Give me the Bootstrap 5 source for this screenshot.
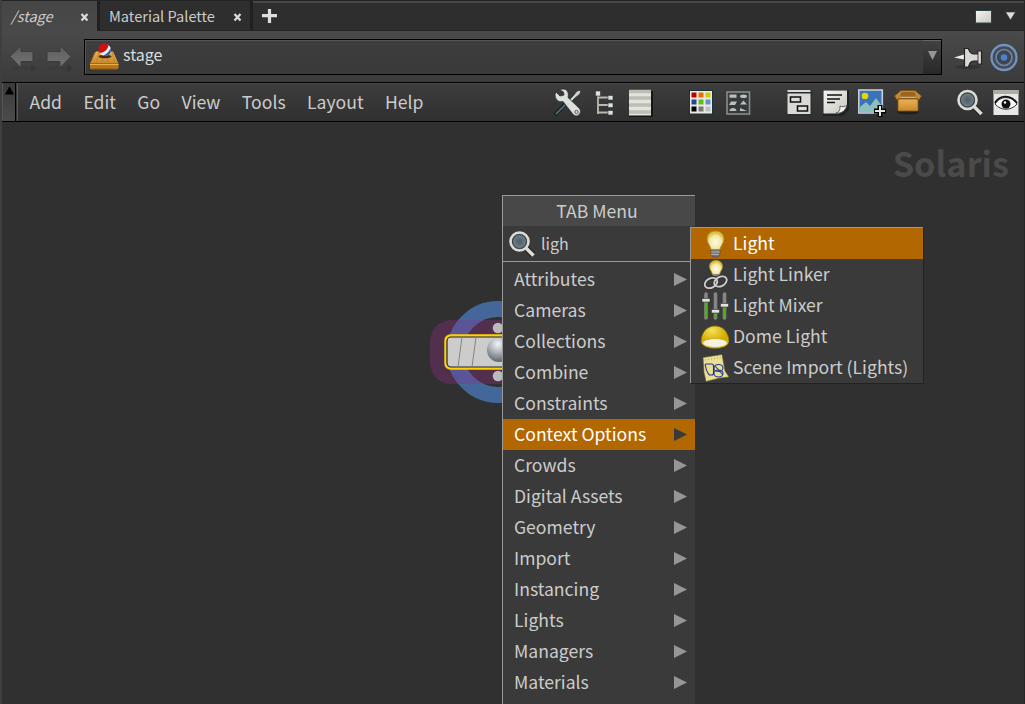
<!DOCTYPE html>
<html lang="en">
<head>
<meta charset="utf-8">
<meta name="viewport" content="width=device-width, initial-scale=1">
<title>Network Editor</title>
<link href="https://cdn.jsdelivr.net/npm/bootstrap@5.3.0/dist/css/bootstrap.min.css" rel="stylesheet">
<style>
body{width:1025px;height:704px;background:#303030;color:#ccc;font-family:"Noto Sans CJK SC","Noto Sans",sans-serif;font-size:17.6px;line-height:31px}
svg{display:block;flex:none}
.pane{border-left:2px solid #3f3f3f;border-right:1px solid #262626}
.tabs{height:31px;background:#2e2e2e;border-top:1px solid #242424;box-shadow:inset 0 2px #474747;font-size:14.6px;line-height:25px;border-bottom:1px solid #242424}
.tab-on{width:95px;height:31px;padding:2px 8px 0 9px;background:linear-gradient(#464646,#494949);position:relative}
.tab-off{width:156px;height:29px;padding:2px 8px 0 9px;border-left:3px solid #202020;border-right:3px solid #202020;background:#2e2e2e}
.pathbar{height:51px;background:linear-gradient(#4a4a4a,#3b3b3b)}
.pathbox{width:858px;height:36px;border:1px solid #000;box-shadow:inset 1px 1px #555;background:linear-gradient(#3e3e3e,#393939);font-size:16px;line-height:29px;color:#ddd}
.drop{width:18px;height:34px;background:linear-gradient(#414141,#282828);border-top:1px solid #666}
.menubar{height:40px;border-top:1px solid #000;border-bottom:1px solid #000;background:linear-gradient(#3d3d3d,#303030);box-shadow:inset 0 1px #484848;line-height:37px}
.grip{width:14px;height:38px;background:linear-gradient(#3a3a3a,#4c4c4c);border-right:1px solid #000;border-left:1px solid #555}
.menus{border-left:1px solid #5a5a5a;padding-left:11.5px;gap:21.4px;margin-left:1px}
.canvas{height:582px;overflow:hidden}
.ctx{font-weight:700;font-size:34.3px;line-height:50px;color:#4a4a4a;right:15px;top:15px}
.node{left:426px;top:174px}
.popup{left:502px;top:195px;width:193px;height:509px;background:#3a3a3a;border-left:1px solid #999;border-top:1px solid #999;overflow:hidden}
.popup-head{height:30px;background:#484848;line-height:29px}
.find{height:36px;border-bottom:1px solid #999;font-size:16px;line-height:35px;padding-left:5px;gap:6px;margin-bottom:2px}
.item{height:31px;padding:0 8px 2px 11px}
.item svg{margin-top:2px}
.hot{background:#b26700;color:#fff}
.arr{width:13px;height:13px;margin-top:2px;background:#969696;clip-path:polygon(0 0,100% 50%,0 100%)}
.hot .arr{background:#3a3a3a}
.submenu{left:690px;top:227px;width:233px;height:156px;background:#3a3a3a;border-left:1px solid #999;border-top:1px solid #999;box-shadow:1px 1px #222}
.submenu .item{padding:0 0 2px 10px;gap:4px}
</style>
<script src="https://cdn.jsdelivr.net/npm/bootstrap@5.3.0/dist/js/bootstrap.bundle.min.js"></script>
</head>
<body class="overflow-hidden position-relative">
<svg width="0" height="0" class="position-absolute">
<defs>
<linearGradient id="wood" x2="0" y2="1"><stop stop-color="#f0b050"/><stop offset="1" stop-color="#c48a30"/></linearGradient>
<linearGradient id="paper" x2="1" y2="1"><stop stop-color="#f4f4f2"/><stop offset="1" stop-color="#c8c8c0"/></linearGradient>
<radialGradient id="lens"><stop stop-color="#4c5b66"/><stop offset="1" stop-color="#7e8c92"/></radialGradient>
<radialGradient id="bulb" cx=".5" cy=".6"><stop stop-color="#fffbe0"/><stop offset=".7" stop-color="#f1e8a8"/><stop offset="1" stop-color="#d9c33c"/></radialGradient>
<radialGradient id="ball" cx=".45" cy=".25" r=".75"><stop stop-color="#f4f6f7"/><stop offset=".5" stop-color="#aab0b5"/><stop offset="1" stop-color="#5c646a"/></radialGradient>
<radialGradient id="dome" cx=".4" cy=".2"><stop stop-color="#f5e25c"/><stop offset="1" stop-color="#d4ad00"/></radialGradient>
<linearGradient id="arrow" x2="0" y2="1"><stop stop-color="#5c5c5c"/><stop offset="1" stop-color="#757575"/></linearGradient>
<symbol id="mag" viewBox="0 0 28 28"><path d="M17 17l8 8" stroke="#222" stroke-width="6"/><path d="M17 17l8.500 8.500" stroke="#dcdcd6" stroke-width="3.600"/><circle cx="11.500" cy="11.500" r="9" fill="url(#lens)" stroke="#dcdcd6" stroke-width="2.600"/><circle cx="11.500" cy="11.500" r="7" fill="none" stroke="#39444a" stroke-width="1.200"/></symbol>
</defs>
</svg>

<main class="pane">
  <div class="tabs d-flex">
    <div class="tab-on d-flex justify-content-between align-items-start"><em>/stage</em>
      <svg width="9" height="24" viewBox="0 0 9 24"><path d="M1.500 11l6 6.500m0-6.500l-6 6.500" stroke="#ddd" stroke-width="2.200"/></svg></div>
    <div class="tab-off d-flex justify-content-between align-items-start"><span>Material Palette</span>
      <svg width="9" height="24" viewBox="0 0 9 24"><path d="M1.500 11l6 6.500m0-6.500l-6 6.500" stroke="#ddd" stroke-width="2.200"/></svg></div>
    <svg class="ms-2 mt-2" width="17" height="16" viewBox="0 0 17 16"><path d="M8.500 -.5v14.500M1 6.700h15" stroke="#ddd" stroke-width="3.200"/></svg>
    <svg class="ms-auto me-1" width="46" height="29" viewBox="0 0 46 29"><rect x="1.500" y="9.500" width="16" height="12.500" fill="url(#paper)" stroke="#2c4248" stroke-width="1"/><path d="M31.500 11h10l-5 8z" fill="#ddd" stroke="#2c4248" stroke-width=".7"/></svg>
  </div>

  <div class="pathbar d-flex align-items-center">
    <svg width="82" height="50" viewBox="0 1 82 50">
      <ellipse cx="22" cy="37" rx="14" ry="2" fill="#3c3c3c"/><ellipse cx="58" cy="37" rx="14" ry="2" fill="#3c3c3c"/>
      <path d="M8 25.500L19 14.500v6h12v10H19v6z" fill="url(#arrow)" stroke="#3c3c3c"/>
      <path d="M69 25.500L58 14.500v6H45v10h13v6z" fill="url(#arrow)" stroke="#3c3c3c"/>
      <path d="M29 33l5 4.500-5 4.500zm36 0l5 4.500-5 4.500z" fill="#373737"/></svg>
    <div class="pathbox d-flex">
      <svg width="30" height="34" viewBox="0 0 30 34" class="me-1 ms-1">
        <path d="M7 11.500h17l5.500 12H1z" fill="url(#wood)"/><path d="M6 12L2 23m8-11L7 23m7-11l-1 11m5-11l1 11m4-11l3 11" stroke="#c37f1c" stroke-width=".8"/>
        <path d="M1 23.500h28.500v5l-2 1H3l-2-1z" fill="#b87516"/><path d="M1 24.500h28.500" stroke="#e9ae4f"/><path d="M3 29.200h25" stroke="#774602"/>
        <ellipse cx="16" cy="16.500" rx="6.500" ry="1.800" fill="#4a2c10"/><circle cx="16" cy="10" r="6" fill="#eee"/><path d="M10.600 13A6 6 0 0 1 19.500 5c-.5 4.500-4 7.500-8.900 8z" fill="#cc1212"/><path d="M14 15.700c4-1.500 6.500-4.500 7.600-7.700 1.500 4.500-2 9-7.600 7.700z" fill="#225aa4"/></svg>
      <span>stage</span>
      <div class="drop ms-auto d-flex align-items-center justify-content-center"><svg width="9" height="9" class="mb-1"><path d="M0 0h9L4.500 9z" fill="#969696"/></svg></div>
    </div>
    <svg width="80" height="50" viewBox="0 0 80 50">
      <g transform="translate(0 -1)"><ellipse cx="26" cy="36" rx="13" ry="2" fill="#333"/>
      <path d="M12 26.500l10-3v5z" fill="#eee"/><path d="M22.500 17.500h4c1 4 2 5 5 5.500h4v-3h4v13h-4v-3h-4c-3 0-4 2-5 6h-4z" fill="#d9d9d4" stroke="#222" stroke-width="1.200"/><path d="M36 20v13" stroke="#444"/></g>
      <circle cx="62" cy="25.500" r="12.500" fill="#454b53" stroke="#7492bd" stroke-width="2.300"/><circle cx="62" cy="25.500" r="8" fill="#40464e" stroke="#6a87b0" stroke-width="1.700"/><circle cx="62" cy="25.500" r="3.300" fill="#4b80cf"/></svg>
  </div>

  <div class="menubar d-flex position-relative">
    <div class="grip d-flex justify-content-center"><svg width="9" height="9" class="mt-1"><path d="M4.500 -1L9 7.500H0z"/></svg></div>
    <nav class="menus d-flex"><span>Add</span><span>Edit</span><span>Go</span><span>View</span><span>Tools</span><span>Layout</span><span>Help</span></nav>
    <svg class="ms-auto" width="474" height="38" viewBox="550 83 474 38">
      <!-- wrench and screwdriver -->
      <path d="M555 115l12-13" stroke="#18272c" stroke-width="4.500"/><path d="M556 114l12-12" stroke="#657174" stroke-width="1.500"/><path d="M567 102l6-6 4-5 4-1-1 4-5 4-6 6z" fill="#d2d2cd" stroke="#243237" stroke-width=".8"/>
      <path d="M559 89.500l5-.5c4 1 5 5 4 8.500l11 10.500c3 3 1 7-2 8-2 0-4-1-5-3l-9-11.500c-5 1-8-2-8-7.500l1.500-1.500 3.500 3.500 4-1-.5-3z" fill="#dededa" stroke="#243237" stroke-width=".8"/><circle cx="576.500" cy="112" r="1.700" fill="#ddd" stroke="#555"/>
      <!-- hierarchy -->
      <path d="M598 94v20M598 97.500h12M598 105h12M598 112.500h12" stroke="#b9b9ae" stroke-width="1.800" fill="none"/><path d="M595.500 91h5v5h-5zM608 95.500h5v4.500h-5zM608 103h5v4.500h-5zM608 110.500h5v4.500h-5z" fill="#e0e0db" stroke="#29363a" stroke-width=".6"/>
      <!-- rows -->
      <rect x="629" y="91" width="24" height="26" fill="#151515"/><rect x="629" y="90" width="22" height="25.500" fill="#e2e2df"/><path d="M629 91.500h22M629 98h22M629 105h22M629 112h22" stroke="#bdbdb3" stroke-width="3.500"/>
      <!-- palette -->
      <rect x="689.500" y="90.500" width="23" height="23.500" fill="#eaeae8" stroke="#193239"/>
      <g><path d="M691.500 92.500h5v5h-5z" fill="#bd0000"/><path d="M698.500 92.500h5v5h-5z" fill="#e07000"/><path d="M705.500 92.500h5v5h-5z" fill="#d9c500"/><path d="M691.500 99.500h5v5h-5z" fill="#204a87"/><path d="M698.500 99.500h5v5h-5z" fill="#62bd18"/><path d="M705.500 99.500h5v5h-5z" fill="#6891c2"/><path d="M691.500 106.500h5v5h-5z" fill="#000"/><path d="M698.500 106.500h5v5h-5z" fill="#787878"/><path d="M705.500 106.500h5v5h-5z" fill="#c2c2bd"/></g>
      <!-- shapes -->
      <rect x="727" y="92" width="22.500" height="22" fill="#363a3a" stroke="#878c8d" stroke-width="1.600"/><path d="M729.500 94.500h7v3.200h-7zM731 101.500h6l-2 3.500h-6zM729.500 111c0-4 7-4 7 0zM740 104.500l3.500-4 3.500 4zM740 108l7 3h-7z" fill="#bdbfbe"/><ellipse cx="743.500" cy="96.200" rx="3.500" ry="1.800" fill="#bdbfbe"/>
      <!-- network boxes -->
      <rect x="787" y="90" width="25" height="25.500" fill="#26302f"/><path d="M787.500 90h23v2h-23zM787.500 93.500h23v20.500h-23z" fill="#d9d9d6"/><path d="M790.500 97h10v5h-10zM797.500 106h10v5h-10z" fill="#ddd" stroke="#111" stroke-width="1.600"/>
      <!-- note -->
      <path d="M823 90h26v20l-6 6h-20z" fill="#1c2323"/><path d="M823.500 90.500h23.500v15l-8 8h-15.500z" fill="url(#paper)"/><path d="M827 95h15M827 99h13M827 102.500h8" stroke="#111" stroke-width="1.500"/><path d="M836 113c4-1 4-4 4-7 2 1 5 1 7-1-1 5-5 9-11 8z" fill="#f2f2ef" stroke="#444" stroke-width=".8"/>
      <!-- picture -->
      <rect x="858.800" y="90" width="23.500" height="23" fill="#3a73b8" stroke="#c5cdd2" stroke-width="1.600"/><path d="M860 112v-5l6-5 4 4 6-8 5 7v7z" fill="#8bc0bb"/><circle cx="865" cy="96" r="3.300" fill="#ead20a"/><path d="M880 105v12M874 111h12" stroke="#000" stroke-width="5"/><path d="M880 106v10M875 111h10" stroke="#e5e5e5" stroke-width="2"/>
      <!-- crate -->
      <ellipse cx="908" cy="112" rx="11" ry="2.500" fill="#202020"/><path d="M898 99h20v12h-20z" fill="url(#wood)" stroke="#8b540b" stroke-width=".8"/><path d="M901 90.500h14l6.500 5.500-2.500 4-3-2h-16l-3 2-2.500-4z" fill="#c08a3c" stroke="#7b4b0b" stroke-width=".8"/><path d="M901.500 92h13l1.500 4.500h-16z" fill="#9b651b"/><path d="M900 97.700h16" stroke="#e6bd78"/>
      <use href="#mag" x="956" y="88.500" width="28" height="28"/>
      <!-- eye -->
      <rect x="993.500" y="90" width="25" height="25" fill="#e7e7e5"/><path d="M993.500 90h25v4h-25z" fill="#adada8"/><path d="M995 104c5-8 16-9 22 0-6 7-16 7-22 0z" fill="#f7f7f7" stroke="#333" stroke-width="1"/><path d="M995 103c5-9 16-8 22 0" fill="none" stroke="#111" stroke-width="1.800"/><circle cx="1006" cy="104" r="4.500" fill="#111"/><circle cx="1005" cy="102.500" r="1.200" fill="#fff"/>
    </svg>
  </div>

  <section class="canvas position-relative">
    <div class="ctx position-absolute">Solaris</div>
    <svg class="node position-absolute" width="144" height="112" viewBox="428 296 144 112">
      <path d="M445 320h105q14 8 14 20v24q0 12-14 20H449q-17-3-19-20v-24q2-17 19-20z" fill="#512f4d"/>
      <clipPath id="band"><path d="M428 320h144v64H428z"/></clipPath>
      <circle cx="498" cy="352" r="43" fill="none" stroke="#436799" stroke-width="16"/>
      <circle cx="498" cy="352" r="43" fill="none" stroke="#5c5498" stroke-width="16" clip-path="url(#band)"/>
      <circle cx="498" cy="328" r="5.300" fill="#bbb"/><circle cx="498" cy="376" r="5.300" fill="#bbb"/>
      <rect x="445.500" y="335.500" width="106" height="33" rx="5" fill="#ccc" stroke="#ffd200" stroke-width="2.400"/><rect x="447" y="337" width="103" height="30" rx="4" fill="#ccc" stroke="#222" stroke-width="1.200"/>
      <path d="M462 337l-4 30m18-30l-4 30" stroke="#858585"/><circle cx="499" cy="350" r="12" fill="url(#ball)"/>
    </svg>
  </section>
</main>

<div class="popup position-absolute">
  <div class="popup-head text-center pe-1">TAB Menu</div>
  <div class="find d-flex align-items-center"><svg width="27" height="27"><use href="#mag" width="28" height="28"/></svg><span>ligh</span></div>
  <div class="item d-flex justify-content-between align-items-center">Attributes<i class="arr"></i></div>
  <div class="item d-flex justify-content-between align-items-center">Cameras<i class="arr"></i></div>
  <div class="item d-flex justify-content-between align-items-center">Collections<i class="arr"></i></div>
  <div class="item d-flex justify-content-between align-items-center">Combine<i class="arr"></i></div>
  <div class="item d-flex justify-content-between align-items-center">Constraints<i class="arr"></i></div>
  <div class="item hot d-flex justify-content-between align-items-center">Context Options<i class="arr"></i></div>
  <div class="item d-flex justify-content-between align-items-center">Crowds<i class="arr"></i></div>
  <div class="item d-flex justify-content-between align-items-center">Digital Assets<i class="arr"></i></div>
  <div class="item d-flex justify-content-between align-items-center">Geometry<i class="arr"></i></div>
  <div class="item d-flex justify-content-between align-items-center">Import<i class="arr"></i></div>
  <div class="item d-flex justify-content-between align-items-center">Instancing<i class="arr"></i></div>
  <div class="item d-flex justify-content-between align-items-center">Lights<i class="arr"></i></div>
  <div class="item d-flex justify-content-between align-items-center">Managers<i class="arr"></i></div>
  <div class="item d-flex justify-content-between align-items-center">Materials<i class="arr"></i></div>
</div>

<div class="submenu position-absolute">
  <div class="item hot d-flex align-items-center">
    <svg width="28" height="28" viewBox="0 0 28 28"><path d="M10 19h9v5l-2 3h-5l-2-3z" fill="#777" stroke="#444" stroke-width=".6"/><path d="M10 22h9M10 24.500h8" stroke="#bbb" stroke-width=".8"/><path d="M14.500 1c5 0 8.500 3.500 8.500 8 0 4-3 6-4 10.500h-9C9 15 6 13 6 9c0-4.500 3.500-8 8.500-8z" fill="url(#bulb)" stroke="#a98b34" stroke-width=".9"/></svg>Light</div>
  <div class="item d-flex align-items-center">
    <svg width="28" height="30" viewBox="0 0 28 30"><path d="M15 .5c4 0 6.500 2.500 6.500 6 0 3-2 4-3 8h-7c-1-4-3-5-3-8 0-3.500 2.500-6 6.500-6z" fill="url(#bulb)" stroke="#b6a032" stroke-width=".7"/><path d="M12 15h6" stroke="#888" stroke-width="2"/><g fill="none"><ellipse cx="10" cy="23" rx="6.700" ry="4.600" transform="rotate(-28 10 23)" stroke="#333" stroke-width="3.600"/><ellipse cx="19.500" cy="21.500" rx="6.700" ry="4.600" transform="rotate(-28 19.500 21.500)" stroke="#333" stroke-width="3.600"/><ellipse cx="10" cy="23" rx="6.700" ry="4.600" transform="rotate(-28 10 23)" stroke="#ccc" stroke-width="1.900"/><ellipse cx="19.500" cy="21.500" rx="6.700" ry="4.600" transform="rotate(-28 19.500 21.500)" stroke="#ccc" stroke-width="1.900"/></g></svg>Light Linker</div>
  <div class="item d-flex align-items-center">
    <svg width="28" height="28" viewBox="0 0 28 28"><path d="M5 2v24M14.500 2v24M23.500 2v24" stroke="#858585" stroke-width="3.600" stroke-linecap="round"/><path d="M5 9v17M14.500 20v6M23.500 14v12" stroke="#4fae12" stroke-width="2.200"/><path d="M1 6.500h8v3.500H1zM10.500 17.500h8v3.500h-8zM19.500 11.500h8v3.500h-8z" fill="#e2e2df" stroke="#333" stroke-width=".6"/></svg>Light Mixer</div>
  <div class="item d-flex align-items-center">
    <svg width="28" height="28" viewBox="0 0 28 28"><path d="M0 18.500C.5 8 7 3 14 3s13.500 5 14 15.500c-2 9-26 9-28 0z" fill="url(#dome)" stroke="#8c7200" stroke-width=".8"/><ellipse cx="14" cy="20" rx="12.500" ry="4.500" fill="#f4f1df" stroke="#cfae1c"/></svg>Dome Light</div>
  <div class="item d-flex align-items-center">
    <svg width="28" height="28" viewBox="0 0 28 28"><path d="M2 3.500L21 .5l3 16.500 4 6-9 1-14 3.500-2-9z" fill="#e9df95" stroke="#645d2b" stroke-width=".6"/><path d="M4 6l16-2.500" stroke="#b0a75e" stroke-dasharray="1 2"/><g fill="none" stroke="#213694" stroke-width="1.100"><path d="M4.500 12q-1-2 1-2h5q2 0 2 2v7q0 2-2 2h-2q-3-3-4-9z"/><ellipse cx="17.500" cy="14" rx="4.500" ry="3.500"/><path d="M14 12l8 9"/><ellipse cx="17.500" cy="19.500" rx="4.500" ry="3.500"/></g></svg>Scene Import (Lights)</div>
</div>
</body>
</html>
